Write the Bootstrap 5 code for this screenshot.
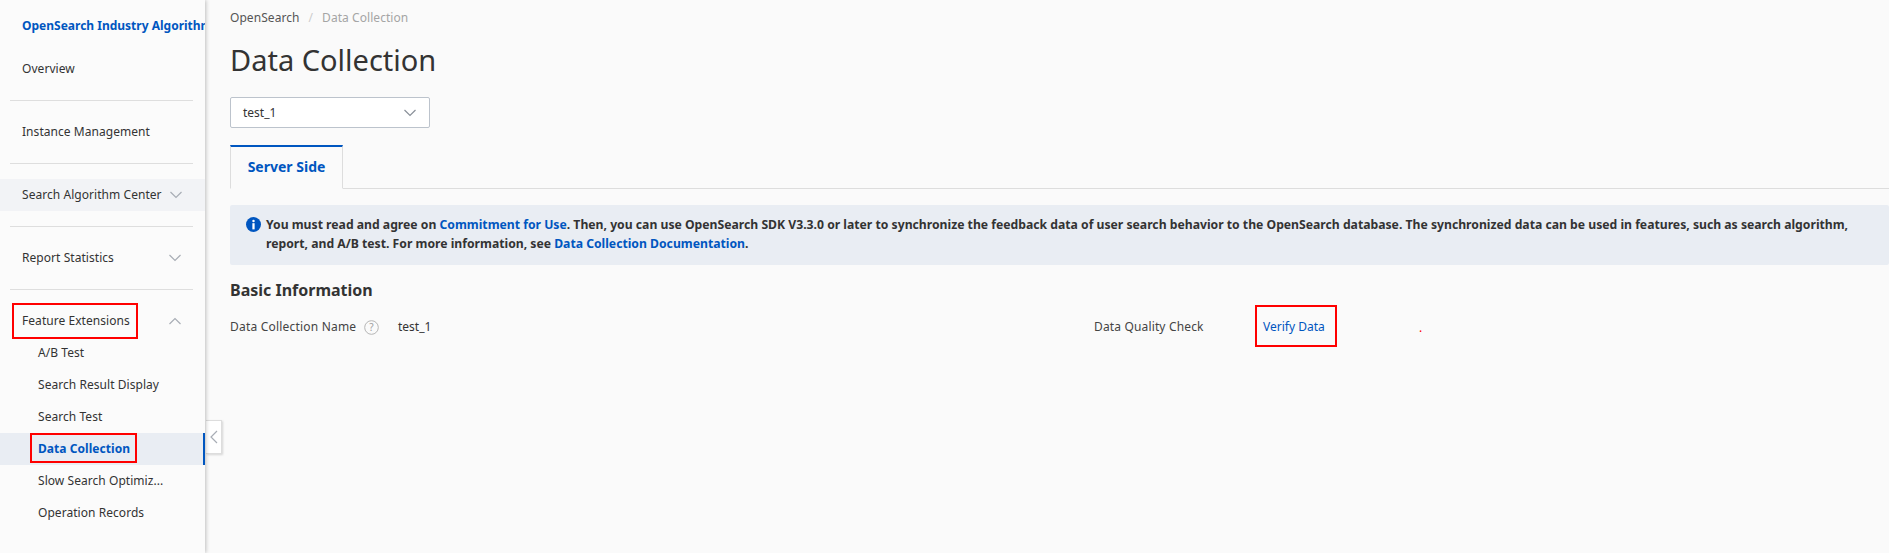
<!doctype html>
<html lang="en">
<head>
<meta charset="utf-8">
<title>Data Collection</title>
<link rel="stylesheet" href="https://cdn.jsdelivr.net/npm/bootstrap@5.3.0/dist/css/bootstrap.min.css">
<style>
html,body{height:553px;overflow:hidden}
body{background:#fafafa;color:#333;font-family:"Noto Sans","Open Sans",sans-serif;font-size:12px}
.shell{height:553px}
.side{width:205px;flex:none;background:#fbfbfb;box-shadow:1px 0 4px rgba(0,0,0,.24);position:relative;z-index:2;height:553px}
.side-title{height:52px;padding:18px 0 0 22px;color:#0056c0;font-weight:700;font-size:12px;line-height:16px;white-space:nowrap;overflow:hidden}
.side-item{height:32px;padding:0 22px;display:flex;align-items:center;justify-content:space-between;color:#333;line-height:32px;white-space:nowrap;letter-spacing:.05px}
.side-rule{border:0;border-top:1px solid #dedede;opacity:1;margin:15px 12px 15px 10px}
.side-first{margin-top:1px}
.side-hover{background:#f2f3f6}
.side-sub{padding-left:38px;justify-content:flex-start}
.side-on{background:#e9edf3;color:#0056c0;font-weight:700;border-right:2px solid #0056c0}
.chev{width:14px;height:8px;flex:none;margin-right:1px}
.chev-tight{margin-left:7px;margin-right:auto}
.red-a,.red-b,.red-c{position:absolute;border:2px solid #f00;pointer-events:none}
.red-a{left:12px;top:303px;width:126px;height:36px}
.red-b{left:30px;top:433px;width:107px;height:30px}
.collapse-tab{position:absolute;left:206px;top:420px;width:16px;height:34px;background:#fff;border:1px solid #ddd;border-left:0;box-shadow:1px 1px 2px rgba(0,0,0,.15);z-index:1;display:flex;align-items:center;justify-content:center}
.page{flex:1 1 auto;min-width:0;padding-left:25px}
.crumbs{--bs-breadcrumb-margin-bottom:0;--bs-breadcrumb-divider-color:#ccc;--bs-breadcrumb-item-active-color:#a5a5a5;--bs-breadcrumb-item-padding-x:9px;height:17px;padding-top:9px;line-height:17px;color:#555;letter-spacing:.06px}
.crumbs .breadcrumb-item{line-height:17px}
.page-h{font-size:29px;font-weight:400;line-height:38px;margin:24px 0 0;color:#333}
.pick{width:200px;height:31px;margin-top:18px;border:1px solid #bcc3cc;border-radius:2px;background:#fff;padding:0 12px;display:flex;align-items:center;justify-content:space-between}
.tabs{--bs-nav-tabs-border-color:#ddd;--bs-nav-tabs-border-radius:0;--bs-nav-tabs-border-width:1px;margin-top:17px}
.tabs .nav-link.active{color:#0056c0;background:#fafafa;font-weight:700;font-size:14px;width:113px;height:44px;padding:0;line-height:40px;text-align:center;border-color:#ddd #ddd #fafafa;border-top:2px solid #0056c0}
.note{--bs-alert-border-radius:2px;background:#e9edf3;border:0;color:#333;height:60px;margin:16px 0 0;padding:10px 16px;font-weight:700;font-size:12.2px;line-height:19px}
.note a{color:#0056c0;text-decoration:none}
.info-ic{width:15px;height:15px;flex:none;margin:2px 5px 0 0}
.sub-h{font-size:16px;font-weight:700;line-height:22px;margin:14px 0 0;color:#333}
.facts{margin-top:5px;height:42px;position:relative;align-items:center}
.fact-l{width:168px;display:flex;align-items:center;white-space:nowrap;color:#444;letter-spacing:.2px}
.fact-v{width:696px}
.fact-l2{width:168px;color:#444;white-space:nowrap;letter-spacing:.15px}
.verify{color:#0056c0;text-decoration:none;margin-left:1px}
.red-c{left:1025px;top:-1px;width:82px;height:42px}
.red-dot{position:absolute;left:1189px;top:16px;color:#f00;line-height:1}
</style>
</head>
<body>
<div class="shell d-flex position-relative">
  <aside class="side">
    <div class="side-title">OpenSearch Industry Algorithm Edition</div>
    <nav class="d-flex flex-column">
      <div class="side-item side-first">Overview</div>
      <hr class="side-rule">
      <div class="side-item">Instance Management</div>
      <hr class="side-rule">
      <div class="side-item side-hover">Search Algorithm Center
        <svg class="chev chev-tight" viewBox="0 0 14 8" fill="none" stroke="#a8adb5" stroke-width="1.2"><path d="M1.5 1 7 6.5 12.5 1"/></svg></div>
      <hr class="side-rule">
      <div class="side-item">Report Statistics
        <svg class="chev" viewBox="0 0 14 8" fill="none" stroke="#a8adb5" stroke-width="1.2"><path d="M1.5 1 7 6.5 12.5 1"/></svg></div>
      <hr class="side-rule">
      <div class="side-item">Feature Extensions
        <svg class="chev" viewBox="0 0 14 8" fill="none" stroke="#a8adb5" stroke-width="1.2"><path d="M1.5 7 7 1.5 12.5 7"/></svg></div>
      <div class="side-item side-sub">A/B Test</div>
      <div class="side-item side-sub">Search Result Display</div>
      <div class="side-item side-sub">Search Test</div>
      <div class="side-item side-sub side-on">Data Collection</div>
      <div class="side-item side-sub">Slow Search Optimiz...</div>
      <div class="side-item side-sub">Operation Records</div>
    </nav>
    <div class="red-a"></div>
    <div class="red-b"></div>
  </aside>
  <div class="collapse-tab">
    <svg width="8" height="14" viewBox="0 0 8 14" fill="none" stroke="#a8adb5" stroke-width="1.2"><path d="M7 1 1 7l6 6"/></svg>
  </div>
  <main class="page">
    <ol class="breadcrumb crumbs">
      <li class="breadcrumb-item">OpenSearch</li>
      <li class="breadcrumb-item active">Data Collection</li>
    </ol>
    <h1 class="page-h">Data Collection</h1>
    <div class="pick">test_1
      <svg class="chev me-0" viewBox="0 0 14 8" fill="none" stroke="#8a9099" stroke-width="1.2"><path d="M1.5 1 7 6.5 12.5 1"/></svg>
    </div>
    <ul class="nav nav-tabs tabs">
      <li class="nav-item"><a class="nav-link active" href="#">Server Side</a></li>
    </ul>
    <div class="alert note d-flex">
      <svg class="info-ic" viewBox="0 0 16 16"><circle cx="8" cy="8" r="8" fill="#0056c0"/><circle cx="8" cy="4.2" r="1.3" fill="#fff"/><rect x="6.8" y="6.6" width="2.4" height="6.6" fill="#fff"/></svg>
      <div>You must read and agree on <a href="#">Commitment for Use</a>. Then, you can use OpenSearch SDK V3.3.0 or later to synchronize the feedback data of user search behavior to the OpenSearch database. The synchronized data can be used in features, such as search algorithm, report, and A/B test. For more information, see <a href="#">Data Collection Documentation</a>.</div>
    </div>
    <h2 class="sub-h">Basic Information</h2>
    <div class="facts d-flex">
      <div class="fact-l">Data Collection Name
        <svg class="ms-2" width="15" height="15" viewBox="0 0 15 15" fill="none"><circle cx="7.5" cy="7.5" r="6.8" stroke="#b5b5b5"/><text x="7.5" y="11" text-anchor="middle" font-size="10" fill="#a0a0a0" font-family="Noto Sans">?</text></svg>
      </div>
      <div class="fact-v">test_1</div>
      <div class="fact-l2">Data Quality Check</div>
      <a class="verify" href="#">Verify Data</a>
      <div class="red-c"></div>
      <span class="red-dot">.</span>
    </div>
  </main>
</div>
<script src="https://cdn.jsdelivr.net/npm/bootstrap@5.3.0/dist/js/bootstrap.bundle.min.js"></script>
</body>
</html>
